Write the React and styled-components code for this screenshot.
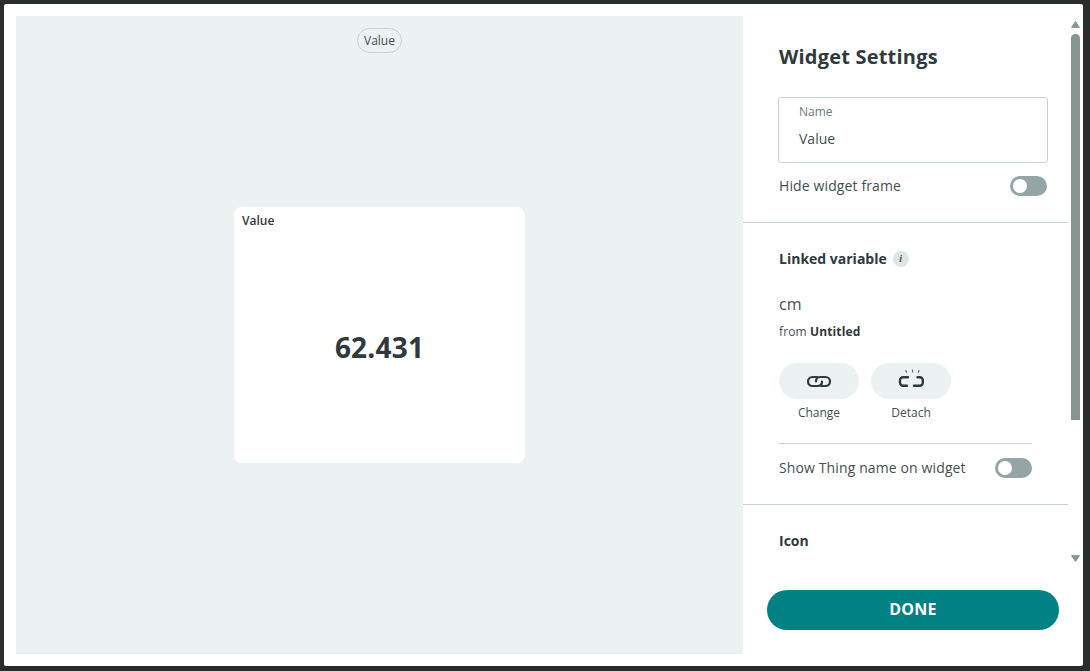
import React from 'react';
import styled, { createGlobalStyle } from 'styled-components';

const GlobalStyle = createGlobalStyle`
html, body {
  margin: 0;
  padding: 0;
  height: 100%;
  background: #2b2d2c;
  overflow: hidden;
}
body {
  font-family: "Open Sans", "Liberation Sans", sans-serif;
  color: #2f393e;
}
* {
  box-sizing: border-box;
}
`;

const Page = styled.div`
width: 1090px;
height: 671px;
padding: 4px 7px 5px 4px;
`;

const Modal = styled.div`
width: 1079px;
height: 662px;
display: flex;
background: #fff;
border-radius: 2px;
`;

const Canvas = styled.div`
width: 727px;
height: 638px;
margin: 12px 0 0 12px;
flex-shrink: 0;
background: #ecf1f1;
display: flex;
flex-direction: column;
align-items: center;
padding-top: 12px;
`;

const WidgetTag = styled.div`
height: 25px;
padding: 0 6px;
border: 1px solid #c9d2d2;
border-radius: 13px;
font-size: 12px;
line-height: 24px;
color: #434f54;
`;

const WidgetCard = styled.div`
width: 291px;
height: 256px;
margin-top: 154px;
background: #fff;
border-radius: 8px;
padding: 6px 8px;
display: flex;
flex-direction: column;
`;

const CardTitle = styled.div`
font-size: 12px;
font-weight: 600;
line-height: 16px;
color: #2f393e;
`;

const CardValue = styled.div`
flex: 1;
display: flex;
align-items: center;
justify-content: center;
font-size: 28px;
font-weight: 700;
letter-spacing: 0.2px;
padding-top: 8px;
color: #2f393e;
`;

const Side = styled.div`
flex: 1;
display: flex;
flex-direction: column;
position: relative;
`;

const ScrollArea = styled.div`
height: 571px;
width: 325px;
overflow: hidden;
`;

const Section = styled.div`
padding: ${(p) => p.$pad || '0 21px 0 36px'};
border-bottom: ${(p) => (p.$last ? 'none' : '1px solid #c9d2d2')};
`;

const Title = styled.h2`
margin: 0;
font-size: 20px;
font-weight: 700;
line-height: 28px;
letter-spacing: 0.2px;
color: #2f393e;
`;

const NameField = styled.div`
height: 66px;
margin: 26px 0 0 -1px;
width: 270px;
border: 1px solid #c9d2d2;
border-radius: 3px;
padding: 6px 20px;
`;

const NameLabel = styled.div`
font-size: 12px;
line-height: 16px;
color: #6d7c80;
`;

const NameValue = styled.div`
font-size: 14px;
line-height: 20px;
margin-top: 9px;
color: #434f54;
`;

const SwitchRow = styled.div`
display: flex;
align-items: center;
justify-content: space-between;
height: 20px;
margin-top: ${(p) => p.$top || 0}px;
font-size: 14px;
letter-spacing: 0.12px;
color: #434f54;
span {
  margin-top: -2px;
}
`;

const Switch = styled.div`
width: 37px;
height: 20px;
border-radius: 10px;
background: #95a5a6;
padding: 3px;
`;

const Knob = styled.div`
width: 14px;
height: 14px;
border-radius: 50%;
background: #fff;
`;

const SubTitle = styled.div`
display: flex;
align-items: center;
gap: 6px;
font-size: 14px;
font-weight: 700;
line-height: 20px;
color: #2f393e;
`;

const InfoBadge = styled.span`
width: 16px;
height: 16px;
border-radius: 50%;
background: #dfe5e5;
display: inline-flex;
align-items: center;
justify-content: center;
font-family: "Liberation Serif", serif;
font-style: italic;
font-weight: 700;
font-size: 10px;
color: #434f54;
`;

const VarName = styled.div`
margin-top: 24px;
font-size: 16px;
line-height: 22px;
color: #434f54;
`;

const VarFrom = styled.div`
margin-top: 9px;
font-size: 12px;
line-height: 16px;
letter-spacing: 0.12px;
color: #434f54;
b {
  font-weight: 700;
  color: #2f393e;
}
`;

const Actions = styled.div`
display: flex;
gap: 12px;
margin-top: 23px;
`;

const Action = styled.div`
width: 80px;
display: flex;
flex-direction: column;
align-items: center;
font-size: 12px;
line-height: 16px;
color: #434f54;
`;

const ActionButton = styled.div`
width: 80px;
height: 36px;
border-radius: 18px;
background: #ecf1f1;
display: flex;
align-items: center;
justify-content: center;
margin-bottom: 6px;
`;

const InnerRule = styled.div`
width: 253px;
height: 1px;
background: #c9d2d2;
margin-top: 22px;
`;

const InnerRow = styled(SwitchRow)`
width: 253px;
`;

const Footer = styled.div`
padding: 15px 0 0 24px;
`;

const DoneButton = styled.button`
width: 292px;
height: 40px;
border: none;
border-radius: 20px;
background: #008184;
color: #fff;
font-family: inherit;
font-size: 16px;
font-weight: 700;
letter-spacing: 0.3px;
padding: 0 0 2px;
`;

const Scrollbar = styled.div`
position: absolute;
top: 17px;
right: 3px;
width: 9px;
height: 541px;
`;

const Arrow = styled.svg`
position: absolute;
left: 0;
${(p) => (p.$down ? 'bottom: 0;' : 'top: 0;')}
`;

const Thumb = styled.div`
position: absolute;
top: 13px;
left: 0;
width: 9px;
height: 386px;
border-radius: 5px 5px 0 0;
background: #879595;
`;

const LinkIcon = () => (
  <svg width="26" height="14" viewBox="0 0 26 14" fill="none" stroke="#2f393e" strokeWidth="2.2" strokeLinecap="round">
    <path d="M11 3H6.500a4.500 4.500 0 0 0 0 9h5.500a4.500 4.500 0 0 0 4-4.500" />
    <path d="M15 12h4.500a4.500 4.500 0 0 0 0-9H14a4.500 4.500 0 0 0-4 4.500" />
  </svg>
);

const DetachIcon = () => (
  <svg width="26" height="24" viewBox="0 0 26 24" fill="none" stroke="#2f393e" strokeWidth="2.4" strokeLinecap="round">
    <path d="M10 8.200H5a3 3 0 0 0-3 3v2.600a3 3 0 0 0 3 3h4" />
    <path d="M19.500 8.200h2.300a3 3 0 0 1 3 3v2.600a3 3 0 0 1-3 3H16" />
    <path d="M7.800 1.500l.7 1.800M14.500 1v2M21 1.500l-.7 1.800" strokeWidth="1.200" stroke="#5c676b" />
  </svg>
);

const ScrollArrow = ({ down }) => (
  <Arrow $down={down} width="9" height="7" viewBox="0 0 9 7">
    <polygon
      points={down ? '0.600,0.600 8.400,0.600 4.500,6.500' : '4.500,0.500 8.400,6.400 0.600,6.400'}
      fill="#879595"
      stroke="#879595"
      strokeWidth="1"
      strokeLinejoin="round"
    />
  </Arrow>
);

class App extends React.Component {
  render() {
    return (
      <Page>
        <GlobalStyle />
        <Modal>
          <Canvas>
            <WidgetTag>Value</WidgetTag>
            <WidgetCard>
              <CardTitle>Value</CardTitle>
              <CardValue>62.431</CardValue>
            </WidgetCard>
          </Canvas>
          <Side>
            <ScrollArea>
              <Section $pad="39px 21px 26px 36px">
                <Title>Widget Settings</Title>
                <NameField>
                  <NameLabel>Name</NameLabel>
                  <NameValue>Value</NameValue>
                </NameField>
                <SwitchRow $top={13}>
                  <span>Hide widget frame</span>
                  <Switch><Knob /></Switch>
                </SwitchRow>
              </Section>
              <Section $pad="26px 36px 26px 36px">
                <SubTitle>
                  Linked variable
                  <InfoBadge>i</InfoBadge>
                </SubTitle>
                <VarName>cm</VarName>
                <VarFrom>from <b>Untitled</b></VarFrom>
                <Actions>
                  <Action>
                    <ActionButton><LinkIcon /></ActionButton>
                    Change
                  </Action>
                  <Action>
                    <ActionButton><DetachIcon /></ActionButton>
                    Detach
                  </Action>
                </Actions>
                <InnerRule />
                <InnerRow $top={14}>
                  <span>Show Thing name on widget</span>
                  <Switch><Knob /></Switch>
                </InnerRow>
              </Section>
              <Section $pad="26px 21px 0 36px" $last>
                <SubTitle>Icon</SubTitle>
              </Section>
            </ScrollArea>
            <Footer>
              <DoneButton>DONE</DoneButton>
            </Footer>
            <Scrollbar>
              <ScrollArrow />
              <Thumb />
              <ScrollArrow down />
            </Scrollbar>
          </Side>
        </Modal>
      </Page>
    );
  }
}

export default App;
